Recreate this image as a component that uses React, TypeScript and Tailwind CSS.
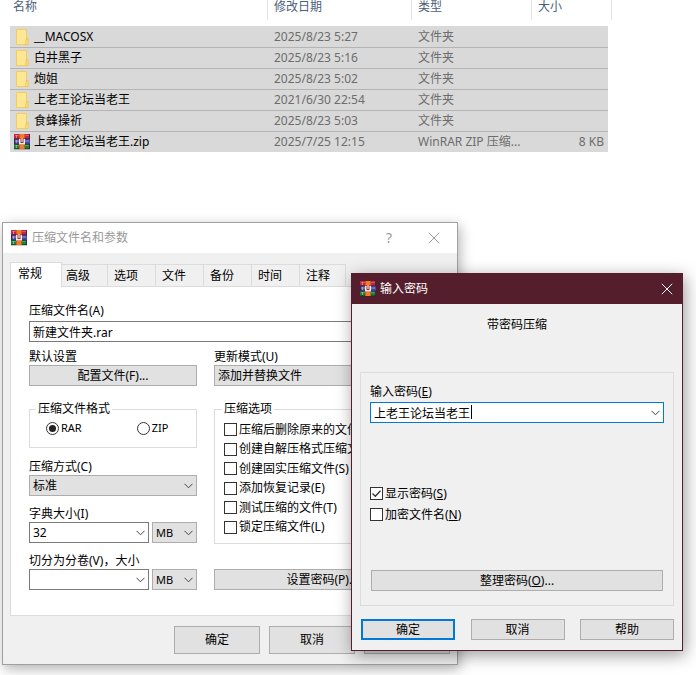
import React from "react";

interface FileRow {
  name: string;
  date: string;
  type: string;
  size?: string;
}

const files: FileRow[] = [
  { name: "__MACOSX", date: "2025/8/23 5:27", type: "文件夹" },
  { name: "白井黑子", date: "2025/8/23 5:16", type: "文件夹" },
  { name: "炮姐", date: "2025/8/23 5:02", type: "文件夹" },
  { name: "上老王论坛当老王", date: "2021/6/30 22:54", type: "文件夹" },
  { name: "食蜂操祈", date: "2025/8/23 5:03", type: "文件夹" },
  {
    name: "上老王论坛当老王.zip",
    date: "2025/7/25 12:15",
    type: "WinRAR ZIP 压缩...",
    size: "8 KB",
  },
];

const tabs = ["高级", "选项", "文件", "备份", "时间", "注释"];

const archiveOptions = [
  "压缩后删除原来的文件(D)",
  "创建自解压格式压缩文件(X)",
  "创建固实压缩文件(S)",
  "添加恢复记录(E)",
  "测试压缩的文件(T)",
  "锁定压缩文件(L)",
];

const FolderIcon = () => (
  <svg width="16" height="16" viewBox="0 0 16 16" className="shrink-0">
    <path d="M2.5 .5h10v15h-10z" fill="#ffe694" stroke="#f2cc5c" />
    <path d="M12.500 9.500h1.500v6h-2.500z" fill="#ffe694" stroke="#efc44c" />
  </svg>
);

const RarIcon = () => (
  <svg width="16" height="16" viewBox="0 0 16 16" className="shrink-0">
    <path d="M0 0h16v15H0z" fill="#3a2a3c" />
    <path d="M0 0h15v5H0z" fill="#c22546" />
    <path d="M1 1h14v1H1z" fill="#e2506c" />
    <path d="M1 5h15v5H1z" fill="#4a4aa4" />
    <path d="M1 6h14v2H1z" fill="#6d70c4" />
    <path d="M0 10h15v5H0z" fill="#16853a" />
    <path d="M1 11h14v1H1z" fill="#3cab5c" />
    <path d="M0 4.500h16v.7H0zM0 9.700h16v.7H0zM0 14.500h16v.7H0z" fill="#2a1d2c" />
    <path d="M2 1h1v3H2zM2 6h1v3H2zM2 11h1v3H2z" fill="#e5c9a0" opacity=".6" />
    <path d="M5 0h6v15H5z" fill="#d4561c" />
    <path d="M6 0h4v4H6zM6 11h4v4H6z" fill="#ef7d25" />
    <path d="M5 4.500h6v6H5z" fill="#9c3324" />
    <path d="M5 5h1.500v4h3V5H11v5.500H5z" fill="#f1ece8" />
    <path d="M7.500 4h1v4h-1z" fill="#fff" />
  </svg>
);

const Chevron = () => (
  <svg
    width="9"
    height="6"
    viewBox="0 0 9 6"
    fill="none"
    stroke="#444"
    className="pointer-events-none absolute right-1 top-2"
  >
    <path d="M.5.8l4 4 4-4" />
  </svg>
);

const CloseIcon = () => (
  <svg width="12" height="12" viewBox="0 0 12 12" stroke="currentColor">
    <path d="M.8.8l10.400 10.400M11.200.8L.8 11.200" />
  </svg>
);

const Select: React.FC<{ value: string; label: string; className: string }> = ({
  value,
  label,
  className,
}) => (
  <div className={`relative ${className}`}>
    <select
      aria-label={label}
      className="block h-[21px] w-full appearance-none border border-[#adadad] bg-[#e1e1e1] px-[3px] leading-[19px]"
    >
      <option>{value}</option>
    </select>
    <Chevron />
  </div>
);

const ComboBox: React.FC<{ id: string; value: string; className: string }> = ({
  id,
  value,
  className,
}) => (
  <div className={`relative ${className}`}>
    <input
      id={id}
      defaultValue={value}
      className="block h-[21px] w-full border border-[#7a7a7a] bg-white px-[3px]"
    />
    <Chevron />
  </div>
);

const CheckBox: React.FC<{ checked?: boolean; children: React.ReactNode }> = ({
  checked,
  children,
}) => (
  <label className="flex items-center gap-[2px] whitespace-nowrap">
    <span className="relative flex h-[13px] w-[13px] shrink-0">
      <input
        type="checkbox"
        defaultChecked={checked}
        className="peer h-[13px] w-[13px] appearance-none border border-[#333] bg-white"
      />
      <svg
        viewBox="0 0 13 13"
        fill="none"
        stroke="#333"
        strokeWidth="1.300"
        className="pointer-events-none absolute inset-0 hidden peer-checked:block"
      >
        <path d="M2.500 6.500l2.800 2.800 5.200-5.600" />
      </svg>
    </span>
    <span>{children}</span>
  </label>
);

const Radio: React.FC<{ label: string; checked?: boolean }> = ({
  label,
  checked,
}) => (
  <label className="flex items-center gap-[2px] text-[11px]">
    <span className="relative flex h-[13px] w-[13px]">
      <input
        type="radio"
        name="format"
        defaultChecked={checked}
        className="peer h-[13px] w-[13px] appearance-none rounded-full border border-[#333] bg-white"
      />
      <span className="pointer-events-none absolute inset-[3px] hidden rounded-full bg-[#222] peer-checked:block" />
    </span>
    {label}
  </label>
);

const Button: React.FC<{ className: string; children: React.ReactNode }> = ({
  className,
  children,
}) => (
  <button
    type="button"
    className={`border bg-[#e1e1e1] text-center whitespace-nowrap ${className}`}
  >
    {children}
  </button>
);

const FileList = () => (
  <table className="ml-[10px] w-[602px] table-fixed border-separate border-spacing-0 text-[#6d6d6d]">
    <colgroup>
      <col className="w-[258px]" />
      <col className="w-[144px]" />
      <col className="w-[120px]" />
      <col className="w-[76px]" />
      <col className="w-[4px]" />
    </colgroup>
    <thead>
      <tr className="h-[26px] text-left align-top text-[#4c607a]">
        <th className="p-0 font-normal">
          <div className="h-5 border-r border-[#e2e2e2] pl-[3px] leading-[14px]">名称</div>
        </th>
        <th className="p-0 font-normal">
          <div className="h-5 border-r border-[#e2e2e2] pl-[6px] leading-[14px]">修改日期</div>
        </th>
        <th className="p-0 font-normal">
          <div className="h-5 border-r border-[#e2e2e2] pl-[6px] leading-[14px]">类型</div>
        </th>
        <th className="p-0 font-normal">
          <div className="h-5 pl-[6px] leading-[14px]">大小</div>
        </th>
        <th className="p-0">
          <div className="h-5 border-r border-[#e2e2e2]" />
        </th>
      </tr>
    </thead>
    <tbody>
      {files.map((file) => (
        <tr key={file.name} className="group h-[21px] leading-5">
          <td className="border-t border-[#b4b4b4] bg-[#d9d9d9] p-0 group-first:border-[#d9d9d9]">
            <div className="flex items-center gap-1 pl-1 text-black">
              {file.size ? <RarIcon /> : <FolderIcon />}
              {file.name}
            </div>
          </td>
          <td className="border-t border-[#b4b4b4] bg-[#d9d9d9] p-0 pl-[6px] group-first:border-[#d9d9d9]">
            {file.date}
          </td>
          <td className="border-t border-[#b4b4b4] bg-[#d9d9d9] p-0 pl-[6px] whitespace-nowrap group-first:border-[#d9d9d9]">
            {file.type}
          </td>
          <td className="border-t border-[#b4b4b4] bg-[#d9d9d9] p-0 pr-1 text-right group-first:border-[#d9d9d9]">
            {file.size}
          </td>
          <td className="p-0" />
        </tr>
      ))}
    </tbody>
  </table>
);

const ArchiveDialog = () => (
  <section className="absolute left-[2px] top-[222px] w-[456px] border border-[#a0a0a0] bg-[#f0f0f0] pb-[10px] shadow-[2px_4px_12px_rgba(0,0,0,0.3)]">
    <header className="flex h-[30px] items-center bg-white pl-2 pr-[17px] text-[#999]">
      <RarIcon />
      <h2 className="ml-[5px] grow">压缩文件名和参数</h2>
      <button type="button" className="mr-9 text-sm">?</button>
      <button type="button" aria-label="关闭">
        <CloseIcon />
      </button>
    </header>
    <div className="px-[7px] pt-[9px]">
      <div role="tablist" className="flex items-end">
        <button
          type="button"
          role="tab"
          aria-selected="true"
          className="relative z-10 -mb-px h-[25px] w-[52px] border border-b-0 border-[#dcdcdc] bg-white pb-0.5 pl-[7px] text-left"
        >
          常规
        </button>
        {tabs.map((tab) => (
          <button
            key={tab}
            type="button"
            role="tab"
            className="h-[22px] w-12 border-r border-t border-[#dcdcdc] bg-[#f0f0f0] pl-[6px] text-left nth-2:w-[46px] nth-2:pl-1 last:w-[46px]"
          >
            {tab}
          </button>
        ))}
      </div>
      <div className="border border-[#dcdcdc] bg-white pb-[25px] pl-[18px] pr-[18px] pt-[14px]">
        <label htmlFor="archive-name" className="block h-5 leading-5">
          压缩文件名(A)
        </label>
        <input
          id="archive-name"
          defaultValue="新建文件夹.rar"
          className="block h-[21px] w-full border border-[#7a7a7a] px-[3px]"
        />
        <div className="mt-[5px] flex gap-[17px]">
          <div className="w-[168px] shrink-0">
            <div className="h-[18px] leading-5">默认设置</div>
            <Button className="block h-[21px] w-full border-[#adadad]">
              配置文件(F)...
            </Button>
            <fieldset className="mt-[14px] h-[48px] border border-[#dcdcdc] pl-4">
              <legend className="-ml-[10px] px-[2px] leading-[18px]">压缩文件格式</legend>
              <div className="flex gap-[55px] pt-[3px]">
                <Radio label="RAR" checked />
                <Radio label="ZIP" />
              </div>
            </fieldset>
            <div className="mt-[9px] h-[18px] leading-5">压缩方式(C)</div>
            <Select label="压缩方式" value="标准" className="w-full" />
            <label htmlFor="dict-size" className="mt-2 block h-[18px] leading-5">
              字典大小(I)
            </label>
            <div className="flex gap-[3px]">
              <ComboBox id="dict-size" value="32" className="w-[120px]" />
              <Select label="字典单位" value="MB" className="grow text-[11px]" />
            </div>
            <label htmlFor="volume-size" className="mt-2 block h-[18px] leading-5">
              切分为分卷(V)，大小
            </label>
            <div className="flex gap-[3px]">
              <ComboBox id="volume-size" value="" className="w-[120px]" />
              <Select label="分卷单位" value="MB" className="grow text-[11px]" />
            </div>
          </div>
          <div className="flex grow flex-col">
            <div className="h-[18px] leading-5">更新模式(U)</div>
            <Select label="更新模式" value="添加并替换文件" className="w-full" />
            <fieldset className="mt-[14px] h-[144px] border border-[#dcdcdc] pl-[9px]">
              <legend className="-ml-[2px] px-[2px] leading-[18px]">压缩选项</legend>
              <div className="mt-0.5 grid h-[117px] grid-rows-6">
                {archiveOptions.map((option) => (
                  <CheckBox key={option}>{option}</CheckBox>
                ))}
              </div>
            </fieldset>
            <Button className="mt-auto h-[21px] w-full border-[#adadad]">
              设置密码(P)...
            </Button>
          </div>
        </div>
      </div>
      <footer className="mt-[10px] flex justify-end gap-[9px]">
        <Button className="h-7 w-[86px] border-[#adadad]">确定</Button>
        <Button className="h-7 w-[86px] border-[#adadad]">取消</Button>
        <Button className="h-7 w-[86px] border-[#adadad]">帮助</Button>
      </footer>
    </div>
  </section>
);

const PasswordDialog = () => (
  <section className="absolute left-[351px] top-[273px] w-[332px] border border-[#551e2d] bg-[#f0f0f0] pb-[10px] shadow-[2px_4px_16px_rgba(0,0,0,0.4)]">
    <header className="flex h-[30px] items-center bg-[#551e2d] pl-2 pr-[9px] text-white">
      <RarIcon />
      <h2 className="ml-1 grow">输入密码</h2>
      <button type="button" aria-label="关闭">
        <CloseIcon />
      </button>
    </header>
    <p className="mt-3 text-center leading-[18px]">带密码压缩</p>
    <div className="px-2">
      <div className="mt-[38px] border border-[#dcdcdc] px-[9px] pb-[14px] pt-[9px]">
        <label htmlFor="password" className="block h-5 leading-5">
          输入密码(<u>E</u>)
        </label>
        <div className="relative">
          <input
            id="password"
            defaultValue="上老王论坛当老王"
            className="block h-[21px] w-full border border-[#0078d7] bg-white px-[3px] outline-none"
          />
          <span className="absolute left-[101px] top-[3px] h-[14px] w-px bg-black" />
          <Chevron />
        </div>
        <div className="mt-[60px] flex flex-col">
          <div className="flex h-[21px] items-center">
            <CheckBox checked>
              显示密码(<u>S</u>)
            </CheckBox>
          </div>
          <div className="flex h-[21px] items-center">
            <CheckBox>
              加密文件名(<u>N</u>)
            </CheckBox>
          </div>
        </div>
        <div className="mt-[45px] px-px">
          <Button className="block h-[21px] w-full border-[#adadad]">
            整理密码(<u>O</u>)...
          </Button>
        </div>
      </div>
      <footer className="mt-[13px] flex justify-between pl-px">
        <Button className="h-[21px] w-[94px] border-2 border-[#0078d7]">确定</Button>
        <Button className="h-[21px] w-[94px] border-[#adadad]">取消</Button>
        <Button className="h-[21px] w-[94px] border-[#adadad]">帮助</Button>
      </footer>
    </div>
  </section>
);

export default function App() {
  return (
    <main className="relative min-h-screen overflow-hidden bg-white font-['Noto_Sans','Noto_Sans_CJK_SC',sans-serif] text-xs text-black">
      <FileList />
      <ArchiveDialog />
      <PasswordDialog />
    </main>
  );
}
